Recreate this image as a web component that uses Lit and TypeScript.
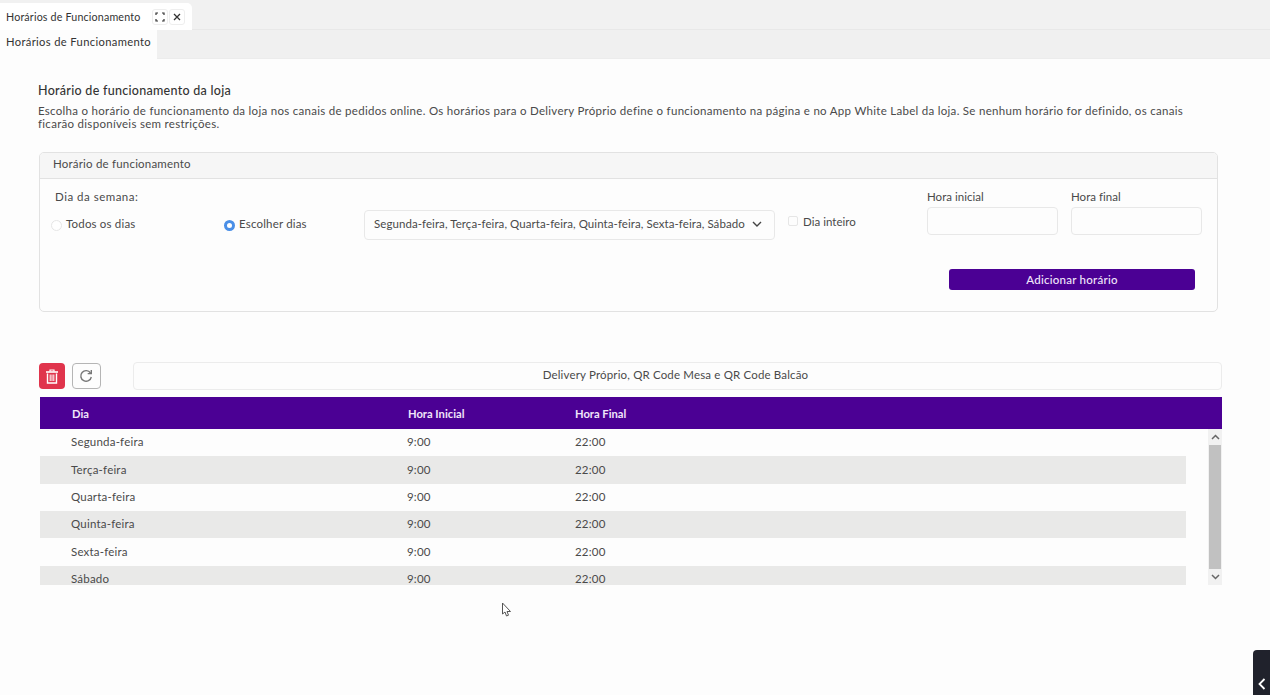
import { LitElement, html, css, svg } from "lit";
import { customElement } from "lit/decorators.js";

const rows = ["Segunda-feira", "Terça-feira", "Quarta-feira", "Quinta-feira", "Sexta-feira", "Sábado"];

@customElement("app-root")
export class AppRoot extends LitElement {
  static styles = css`
    :host { display: block; position: relative; height: 695px; overflow: hidden; background: #fdfdfd; font-family: "Lato", "Liberation Sans", sans-serif; color: #4a4a4a; font-size: 11.5px; letter-spacing: .29px; }
    * { box-sizing: border-box; }
    .topbar { height: 30px; background: #f1f1f1; display: flex; padding-top: 3px; border-bottom: 1px solid #e8e8e8; }
    .tab { width: 192px; height: 27px; background: #fff; border-radius: 0 5px 0 0; display: flex; align-items: center; padding: 0 0 0 6px; color: #333; }
    .tab-title { width: 146px; white-space: nowrap; font-size: 10.7px; letter-spacing: .17px; }
    .tab-btn { width: 16px; height: 16px; border: 1px solid #eee; border-radius: 3px; display: flex; align-items: center; justify-content: center; margin-right: 1px; }
    .subbar { height: 29px; background: #f0f0f0; border-bottom: 1px solid #ececec; }
    .subtab { width: 157px; height: 29px; background: #fdfdfd; padding: 5px 0 0 6px; color: #333; white-space: nowrap; font-size: 11.2px; letter-spacing: .35px; }
    .content { padding: 24px 48px 0 38px; }
    h1 { margin: 0; font-size: 12.5px; font-weight: 500; color: #333; line-height: 16px; letter-spacing: .28px; }
    .desc { margin: 6px 0 0; line-height: 12.5px; width: 1160px; }
    .card { margin: 22px 0 0 1px; width: 1179px; height: 160px; border: 1px solid #e2e2e2; border-radius: 5px; overflow: hidden; }
    .card-head { height: 26px; background: #f6f6f6; border-bottom: 1px solid #e2e2e2; padding: 4px 0 0 13px; line-height: 14px; letter-spacing: .2px; }
    .card-body { display: grid; grid-template-columns: 313px 424px 139px 144px 131px; padding: 0 0 0 11px; height: 90px; }
    .days { padding-top: 11px; }
    .days-label { padding-left: 4px; line-height: 14px; letter-spacing: .5px; }
    .radios { display: flex; margin-top: 13px; align-items: center; letter-spacing: .18px; }
    .radio-item { display: flex; align-items: center; gap: 4px; line-height: 14px; }
    .radio-item.first { width: 173px; }
    .radio { width: 11px; height: 11px; border-radius: 50%; border: 1px solid #e6e6e6; background: #fff; margin-top: 3px; }
    .radio.on { border: 3.5px solid #4a8fe7; }
    .select { margin-top: 31px; width: 411px; height: 30px; border: 1px solid #e8e8e8; border-radius: 4px; display: flex; align-items: center; padding: 0 12px 0 9px; gap: 7px; }
    .select-text { flex: 1; white-space: nowrap; overflow: hidden; letter-spacing: .07px; padding-bottom: 4px; }
    .select svg { margin-bottom: 3px; }
    .whole { margin-top: 36px; display: flex; align-items: flex-start; gap: 5px; line-height: 14px; letter-spacing: .02px; }
    .check { width: 10px; height: 10px; border: 1px solid #e6e6e6; border-radius: 2px; margin-top: 1px; }
    .field { padding-top: 11px; letter-spacing: .02px; }
    .field label { display: block; line-height: 14px; margin-bottom: 3px; }
    .input { width: 131px; height: 28px; border: 1px solid #e8e8e8; border-radius: 4px; }
    .actions { display: flex; justify-content: flex-end; padding: 0 22px 0 0; }
    .add { width: 246px; height: 21px; background: #4b0094; color: #f1e6fa; border-radius: 3px; display: flex; align-items: center; justify-content: center; font-weight: 500; letter-spacing: .25px; }
    .toolbar { display: flex; align-items: center; margin: 50px 0 0 1px; height: 28px; width: 1183px; }
    .del { width: 26px; height: 26px; background: #e0344c; border-radius: 4px; display: flex; align-items: center; justify-content: center; }
    .ref { margin-left: 7px; width: 29px; height: 26px; border: 1px solid #b5b5b5; border-radius: 4px; display: flex; align-items: center; justify-content: center; padding-right: 2px; }
    .channel { margin-left: 32px; flex: 1; height: 28px; border: 1px solid #ececec; border-radius: 4px; display: flex; align-items: center; justify-content: center; letter-spacing: .16px; padding: 0 4px 3px 0; }
    .table { margin: 7px 0 0 2px; width: 1182px; }
    .thead { height: 32px; background: #4b0094; color: #f1e6fa; display: grid; grid-template-columns: 336px 167px 1fr; padding-left: 32px; align-items: center; font-weight: 700; letter-spacing: 0; font-size: 11.2px; }
    .tbody { position: relative; height: 156px; overflow: hidden; display: flex; }
    .rows { width: 1146px; letter-spacing: .2px; }
    .row { height: 27.35px; display: grid; grid-template-columns: 336px 168px 1fr; padding: 0 0 2px 31px; align-items: center; }
    .row.alt { background: #e9e9e8; }
    .scroll { margin-left: 22px; width: 14px; background: #f1f1f1; display: flex; flex-direction: column; align-items: center; justify-content: space-between; }
    .arrow { height: 16px; display: flex; align-items: center; }
    .thumb { flex: 1; width: 12px; background: #c1c1c1; }
    .dock { position: absolute; right: 0; bottom: 0; width: 17px; height: 45px; background: #20222c; border-radius: 4px 0 0 0; display: flex; align-items: flex-end; justify-content: center; padding-bottom: 5px; }
    .cursor { position: absolute; left: 501px; top: 602px; }
  `;

  render() {
    return html`
      <div class="topbar">
        <div class="tab">
          <span class="tab-title">Horários de Funcionamento</span>
          <span class="tab-btn"><svg width="10" height="10" viewBox="0 0 10 10" fill="none" stroke="#333" stroke-width="1.2"><path d="M1 3V1h2M7 1h2v2M9 7v2H7M3 9H1V7"/></svg></span>
          <span class="tab-btn"><svg width="8" height="8" viewBox="0 0 8 8" fill="none" stroke="#333" stroke-width="1.3"><path d="M1 1l6 6M7 1L1 7"/></svg></span>
        </div>
      </div>
      <div class="subbar"><div class="subtab">Horários de Funcionamento</div></div>
      <div class="content">
        <h1>Horário de funcionamento da loja</h1>
        <p class="desc">Escolha o horário de funcionamento da loja nos canais de pedidos online. Os horários para o Delivery Próprio define o funcionamento na página e no App White Label da loja. Se nenhum horário for definido, os canais ficarão disponíveis sem restrições.</p>
        <div class="card">
          <div class="card-head">Horário de funcionamento</div>
          <div class="card-body">
            <div class="days">
              <div class="days-label">Dia da semana:</div>
              <div class="radios">
                <span class="radio-item first"><span class="radio"></span>Todos os dias</span>
                <span class="radio-item"><span class="radio on"></span>Escolher dias</span>
              </div>
            </div>
            <div><div class="select"><span class="select-text">Segunda-feira, Terça-feira, Quarta-feira, Quinta-feira, Sexta-feira, Sábado</span>
              <svg width="10" height="6" viewBox="0 0 10 6" fill="none" stroke="#444" stroke-width="1.4"><path d="M1 1l4 4 4-4"/></svg></div></div>
            <div class="whole"><span class="check"></span>Dia inteiro</div>
            <div class="field"><label>Hora inicial</label><div class="input"></div></div>
            <div class="field"><label>Hora final</label><div class="input"></div></div>
          </div>
          <div class="actions"><div class="add">Adicionar horário</div></div>
        </div>
        <div class="toolbar">
          <div class="del"><svg width="14" height="15" viewBox="0 0 14 15" fill="none" stroke="#fff"><path d="M1 3h12" stroke-width="1.6"/><path d="M5 2.5V1h4v1.5" stroke-width="1.2"/><path d="M2.5 4.5V14h9V4.5" stroke-width="1.4"/><path d="M5.2 5.5v6.5M7 5.5v6.5M8.8 5.5v6.5" stroke-width="1"/></svg></div>
          <div class="ref"><svg width="14" height="14" viewBox="0 0 14 14" fill="none" stroke="#777" stroke-width="1.4"><path d="M11.5 4A5.3 5.3 0 1 0 12.3 8"/><path d="M12.3 1v3.6H8.7" /></svg></div>
          <div class="channel">Delivery Próprio, QR Code Mesa e QR Code Balcão</div>
        </div>
        <div class="table">
          <div class="thead"><span>Dia</span><span>Hora Inicial</span><span>Hora Final</span></div>
          <div class="tbody">
            <div class="rows">
              ${rows.map((d, i) => html`<div class="row ${i % 2 ? "alt" : ""}"><span>${d}</span><span>9:00</span><span>22:00</span></div>`)}
            </div>
            <div class="scroll">
              <span class="arrow"><svg width="9" height="6" viewBox="0 0 9 6" fill="none" stroke="#666" stroke-width="1.5"><path d="M1 5l3.5-3.5L8 5"/></svg></span>
              <span class="thumb"></span>
              <span class="arrow"><svg width="9" height="6" viewBox="0 0 9 6" fill="none" stroke="#666" stroke-width="1.5"><path d="M1 1l3.5 3.5L8 1"/></svg></span>
            </div>
          </div>
        </div>
      </div>
      <div class="dock"><svg width="8" height="12" viewBox="0 0 8 12" fill="none" stroke="#fff" stroke-width="1.8"><path d="M6.5 1L1.5 6l5 5"/></svg></div>
      <svg class="cursor" width="11" height="16" viewBox="0 0 11 16" fill="#fff" stroke="#555" stroke-width="1">${svg`<path d="M1.5 1v11l2.5-2 1.5 4 2-.8-1.5-3.7h3.5z"/>`}</svg>
    `;
  }
}
